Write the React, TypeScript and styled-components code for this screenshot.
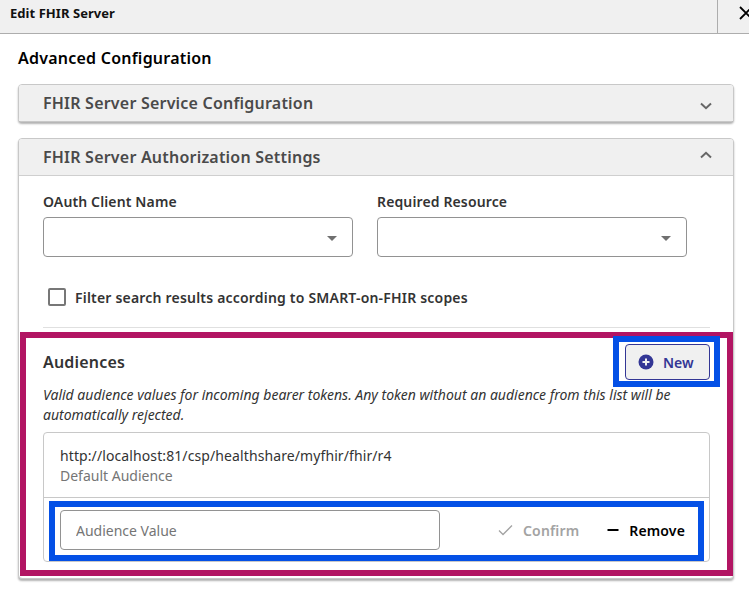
import React from "react";
import styled, { createGlobalStyle } from "styled-components";

const Global = createGlobalStyle`
  html, body { margin: 0; padding: 0; background: #fff; overflow: hidden; }
  body { font-family: "Noto Sans", "Open Sans", sans-serif; color: #333; }
  * { box-sizing: border-box; }
`;

const Page = styled.div`
  width: 749px;
  height: 590px;
  overflow: hidden;
`;

const TitleBar = styled.header`
  height: 34px;
  display: flex;
  align-items: center;
  justify-content: space-between;
  background: #f0f0f0;
  border-bottom: 1px solid #adadad;
`;

const DialogTitle = styled.h1`
  margin: 0 0 8px 10px;
  font-size: 13px;
  font-weight: 700;
  letter-spacing: 0.05px;
  color: #111;
`;

const CloseButton = styled.div`
  width: 32px;
  height: 33px;
  flex: none;
  overflow: hidden;
  padding: 6px 0 0 21px;
  border-left: 1px solid #adadad;
  color: #000;
`;

const Content = styled.main`
  padding: 14px 15px 0 18px;
`;

const SectionHeading = styled.h2`
  margin: 0 0 16px;
  font-size: 16px;
  line-height: 20px;
  font-weight: 600;
  letter-spacing: 0.23px;
  color: #000;
`;

const Card = styled.section`
  margin-bottom: 16px;
  border: 1px solid #c8c8c8;
  border-radius: 4px;
  background: #fff;
  box-shadow: 0 2px 2px rgba(0, 0, 0, 0.3);
`;

const CardHeader = styled.div<{ $open?: boolean }>`
  height: ${(p) => (p.$open ? "37px" : "36px")};
  display: flex;
  align-items: center;
  justify-content: space-between;
  padding: 0 21px 0 24px;
  background: #f0f0f0;
  border-radius: 3px 3px 0 0;
  border-bottom: ${(p) => (p.$open ? "1px solid #cfcfcf" : "none")};
`;

const CardTitle = styled.h3`
  margin: 0;
  font-size: 16px;
  font-weight: 600;
  letter-spacing: 0.21px;
  color: #4a4a4a;
`;

const Chevron = styled.svg<{ $up?: boolean }>`
  margin-top: ${(p) => (p.$up ? "-5px" : "5px")};
  color: #666;
`;

const CardBody = styled.div`
  padding: 16px 0 0 24px;
`;

const FieldGrid = styled.div`
  display: grid;
  grid-template-columns: 310px 310px;
  column-gap: 24px;
`;

const Field = styled.div`
  display: flex;
  flex-direction: column;
`;

const FieldLabel = styled.label`
  height: 25px;
  font-size: 14px;
  line-height: 20px;
  font-weight: 600;
  letter-spacing: 0.13px;
  color: #333;
`;

const SelectBox = styled.div`
  height: 40px;
  display: flex;
  align-items: center;
  justify-content: flex-end;
  padding-right: 15px;
  border: 1px solid #929292;
  border-radius: 4px;
  background: #fff;
`;

const Caret = styled.span`
  width: 0;
  height: 0;
  margin-top: 2px;
  border-left: 5px solid transparent;
  border-right: 5px solid transparent;
  border-top: 5px solid #707070;
`;

const CheckRow = styled.div`
  display: flex;
  align-items: center;
  gap: 9px;
  height: 20px;
  margin: 30px 0 0 5px;
`;

const CheckBox = styled.span`
  width: 18px;
  height: 18px;
  border: 2px solid #777;
  border-radius: 2px;
  background: #fff;
`;

const CheckLabel = styled.span`
  font-size: 14px;
  font-weight: 600;
  letter-spacing: 0.2px;
  color: #333;
`;

const Rule = styled.hr`
  width: 667px;
  height: 1px;
  margin: 20px 0 0;
  border: 0;
  background: #e0e0e0;
`;

const Audiences = styled.div`
  position: relative;
  width: 667px;
  padding-bottom: 16px;
`;

const Highlight = styled.div`
  position: absolute;
  top: 4px;
  left: -23px;
  width: 713px;
  height: 244px;
  border: 6px solid #b21563;
  pointer-events: none;
`;

const AudienceHead = styled.div`
  height: 57px;
  padding-top: 16px;
  display: flex;
  justify-content: space-between;
  align-items: flex-start;
`;

const AudienceTitle = styled.h4`
  margin: 8px 0 0;
  font-size: 16px;
  line-height: 20px;
  font-weight: 600;
  letter-spacing: 0.2px;
  color: #333;
`;

const NewButton = styled.button`
  position: relative;
  width: 85px;
  height: 36px;
  display: flex;
  align-items: center;
  gap: 9px;
  padding: 0 0 0 12px;
  border: 1px solid #333695;
  border-radius: 4px;
  background: #f0f0f0;
  color: #333695;
  font: 600 14px "Noto Sans", sans-serif;
  &::after {
    content: "";
    position: absolute;
    inset: -9px -11px -8px -13px;
    border: 6px solid #0450e6;
  }
`;

const Description = styled.p`
  margin: 0;
  font-size: 14px;
  line-height: 20px;
  font-style: italic;
  color: #333;
`;

const ListBox = styled.div`
  margin-top: 7px;
  height: 130px;
  border: 1px solid #c8c8c8;
  border-radius: 4px;
  display: flex;
  flex-direction: column;
`;

const ListItem = styled.div`
  height: 65px;
  padding: 13px 16px 0;
  border-bottom: 1px solid #c8c8c8;
  flex: none;
`;

const AudienceUrl = styled.div`
  font-size: 14px;
  line-height: 20px;
  letter-spacing: 0.1px;
  color: #333;
`;

const AudienceNote = styled.div`
  font-size: 14px;
  line-height: 20px;
  color: #757575;
`;

const EditRow = styled.div`
  position: relative;
  flex: 1;
  display: flex;
  align-items: flex-start;
  padding: 12px 24px 0 16px;
  &::after {
    content: "";
    position: absolute;
    inset: 3px 5px 0 5px;
    border: 6px solid #0450e6;
    pointer-events: none;
  }
`;

const AudienceInput = styled.input`
  width: 380px;
  height: 40px;
  padding: 0 15px;
  border: 1px solid #929292;
  border-radius: 4px;
  font: 400 14px "Noto Sans", sans-serif;
  color: #333;
  &::placeholder { color: #757575; opacity: 1; }
`;

const RowAction = styled.span<{ $disabled?: boolean }>`
  display: flex;
  align-items: center;
  height: 40px;
  gap: 10px;
  font-size: 14px;
  font-weight: 600;
  letter-spacing: 0.15px;
  color: ${(p) => (p.$disabled ? "#a3a3a3" : "#000")};
  margin-left: ${(p) => (p.$disabled ? "auto" : "28px")};
`;

const ChevronIcon = ({ up }: { up?: boolean }) => (
  <Chevron $up={up} width="12" height="8" viewBox="0 0 12 8" fill="none">
    <path d={up ? "M1 6.5 6 1.8l5 4.7" : "M1 1.5 6 6.2l5-4.7"} stroke="currentColor" strokeWidth="2" />
  </Chevron>
);

export default function App() {
  return (
    <Page>
      <Global />
      <TitleBar>
        <DialogTitle>Edit FHIR Server</DialogTitle>
        <CloseButton>
          <svg width="14" height="14" viewBox="0 0 14 14" fill="none" style={{ display: "block" }}>
            <path d="M1 1 13 13M13 1 1 13" stroke="currentColor" strokeWidth="1.8" />
          </svg>
        </CloseButton>
      </TitleBar>
      <Content>
        <SectionHeading>Advanced Configuration</SectionHeading>
        <Card>
          <CardHeader>
            <CardTitle>FHIR Server Service Configuration</CardTitle>
            <ChevronIcon />
          </CardHeader>
        </Card>
        <Card>
          <CardHeader $open>
            <CardTitle>FHIR Server Authorization Settings</CardTitle>
            <ChevronIcon up />
          </CardHeader>
          <CardBody>
            <FieldGrid>
              <Field>
                <FieldLabel>OAuth Client Name</FieldLabel>
                <SelectBox><Caret /></SelectBox>
              </Field>
              <Field>
                <FieldLabel>Required Resource</FieldLabel>
                <SelectBox><Caret /></SelectBox>
              </Field>
            </FieldGrid>
            <CheckRow>
              <CheckBox />
              <CheckLabel>Filter search results according to SMART-on-FHIR scopes</CheckLabel>
            </CheckRow>
            <Rule />
            <Audiences>
              <Highlight />
              <AudienceHead>
                <AudienceTitle>Audiences</AudienceTitle>
                <NewButton>
                  <svg width="16" height="16" viewBox="0 0 16 16">
                    <circle cx="8" cy="8" r="7.5" fill="currentColor" />
                    <path d="M8 4.5v7M4.5 8h7" stroke="#f0f0f0" strokeWidth="2" />
                  </svg>
                  New
                </NewButton>
              </AudienceHead>
              <Description>
                Valid audience values for incoming bearer tokens. Any token without an audience from this list will be automatically rejected.
              </Description>
              <ListBox>
                <ListItem>
                  <AudienceUrl>http://localhost:81/csp/healthshare/myfhir/fhir/r4</AudienceUrl>
                  <AudienceNote>Default Audience</AudienceNote>
                </ListItem>
                <EditRow>
                  <AudienceInput placeholder="Audience Value" />
                  <RowAction $disabled>
                    <svg width="15" height="12" viewBox="0 0 15 12" fill="none">
                      <path d="M1 6.5 5 10.5 14 1.5" stroke="currentColor" strokeWidth="1.3" />
                    </svg>
                    Confirm
                  </RowAction>
                  <RowAction>
                    <svg width="12" height="12" viewBox="0 0 12 12" fill="none">
                      <path d="M0.5 6H11.5" stroke="currentColor" strokeWidth="2" />
                    </svg>
                    Remove
                  </RowAction>
                </EditRow>
              </ListBox>
            </Audiences>
          </CardBody>
        </Card>
      </Content>
    </Page>
  );
}
